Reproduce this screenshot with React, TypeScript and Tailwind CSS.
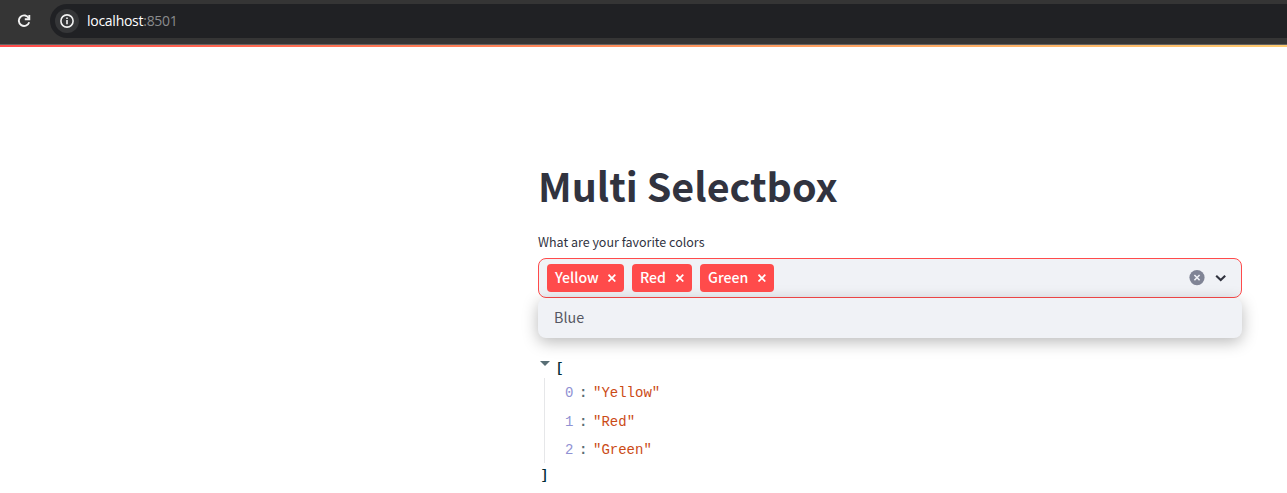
import React from "react";

const sans = "font-['Noto_Sans_CJK_JP',sans-serif]";

function CloseIcon() {
  return (
    <svg width="8" height="8" viewBox="0 0 8 8" stroke="white" strokeWidth="1.7" fill="none">
      <path d="M0.5 0.7 7.3 7.5M7.3 0.7 0.5 7.5" />
    </svg>
  );
}

function Tag({ label, width }: { label: string; width: string }) {
  return (
    <div className={`flex h-7 items-center justify-between rounded bg-[#ff4b4b] pl-2 pr-2 text-white ${width}`}>
      <span className="pb-0.5 text-[14.1px] leading-[26px] font-medium whitespace-nowrap">{label}</span>
      <CloseIcon />
    </div>
  );
}

function BrowserBar() {
  return (
    <header className="flex h-11 bg-[#353535] pt-1">
      <div className="flex h-[34px] w-[50px] items-center pl-[17px]">
        <svg width="14" height="14" viewBox="0 0 14 14" fill="none" stroke="#f2f2f2" strokeWidth="1.9">
          <path d="M11.9 4.3A5.3 5.3 0 1 0 12.2 8.3" />
          <path d="M12.3 0.9V5.2H7.8" />
        </svg>
      </div>
      <div className="flex h-[34px] flex-1 items-center rounded-l-full bg-[#202124] pl-[5px]">
        <div className="flex size-6 items-center justify-center rounded-full bg-[#353638]">
          <svg width="14" height="14" viewBox="0 0 14 14" fill="none" stroke="#f2f2f2">
            <circle cx="7" cy="7" r="6.1" strokeWidth="1.6" />
            <path d="M7 6.1v4.1M7 3.5v1.5" strokeWidth="1.6" />
          </svg>
        </div>
        <span className="ml-2 font-['Open_Sans',sans-serif] text-[14px] leading-5 tracking-[-0.27px] text-white">
          localhost<span className="text-[#8a8b8d]">:8501</span>
        </span>
      </div>
    </header>
  );
}

const selected = ["Yellow", "Red", "Green"];

export default function App() {
  return (
    <div className={`h-[493px] overflow-hidden bg-white text-[#31333f] ${sans}`}>
      <BrowserBar />
      <div className="h-px bg-[#626262]" />
      <div className="h-0.5 bg-linear-to-r from-[#ff4b4b] to-[#ffcb70]" />
      <main className="ml-[538px] w-[704px] pt-[111px]">
        <h1 className="h-[53px] text-[39.45px] leading-[53px] font-bold whitespace-nowrap">Multi Selectbox</h1>
        <p className="mt-[21px] h-5 text-[12.5px] leading-5">What are your favorite colors</p>
        <div className="mt-[6px] flex h-10 items-center gap-2 rounded-lg border border-[#ff4b4b] bg-[#f0f2f6] pl-2 pr-[15px]">
          <Tag label="Yellow" width="w-[77px]" />
          <Tag label="Red" width="w-[60px]" />
          <Tag label="Green" width="w-[74px]" />
          <svg className="mr-0.5 ml-auto" width="16" height="16" viewBox="0 0 16 16">
            <circle cx="8" cy="7.6" r="7.6" fill="#808495" />
            <path d="m5.4 5 5.2 5.2m0-5.2-5.2 5.2" stroke="#f0f2f6" strokeWidth="1.6" />
          </svg>
          <svg width="11" height="8" viewBox="0 0 11 8" fill="none" stroke="#31333f" strokeWidth="2.1">
            <path d="m1.2 1.7 4.5 4.4 4.5-4.4" />
          </svg>
        </div>
        <div className="h-10 rounded-lg bg-[#f0f2f6] pl-4 text-[14.3px] leading-[38px] text-[#555762] shadow-[0_4px_16px_rgba(0,0,0,0.28)]">
          Blue
        </div>
        <div className="pt-[19px] font-['Noto_Sans_Mono_CJK_JP','Liberation_Mono',monospace] text-[14px]">
          <div className="flex h-[21px]">
            <svg className="mt-1 ml-[2px]" width="10" height="5" viewBox="0 0 10 5">
              <path d="M0 0h10L5 5z" fill="#586e75" />
            </svg>
            <span className="ml-[6px] leading-[20px] font-bold text-[#002b36]">[</span>
          </div>
          <ol className="ml-[6px] h-[85px] border-l border-[#e6e7e9] pt-px font-['Liberation_Mono',monospace]">
            {selected.map((color, index) => (
              <li key={color} className="flex h-[28.5px] items-center pt-px pl-[20px]">
                <span className="w-[14px] text-[#9092d3]">{index}</span>
                <span className="w-[14px] font-bold text-[#586e75]">:</span>
                <span className="text-[#cb4b16]">"{color}"</span>
              </li>
            ))}
          </ol>
          <div className="ml-[3px] h-[22px] leading-[22px] font-bold text-[#002b36]">]</div>
        </div>
      </main>
    </div>
  );
}
